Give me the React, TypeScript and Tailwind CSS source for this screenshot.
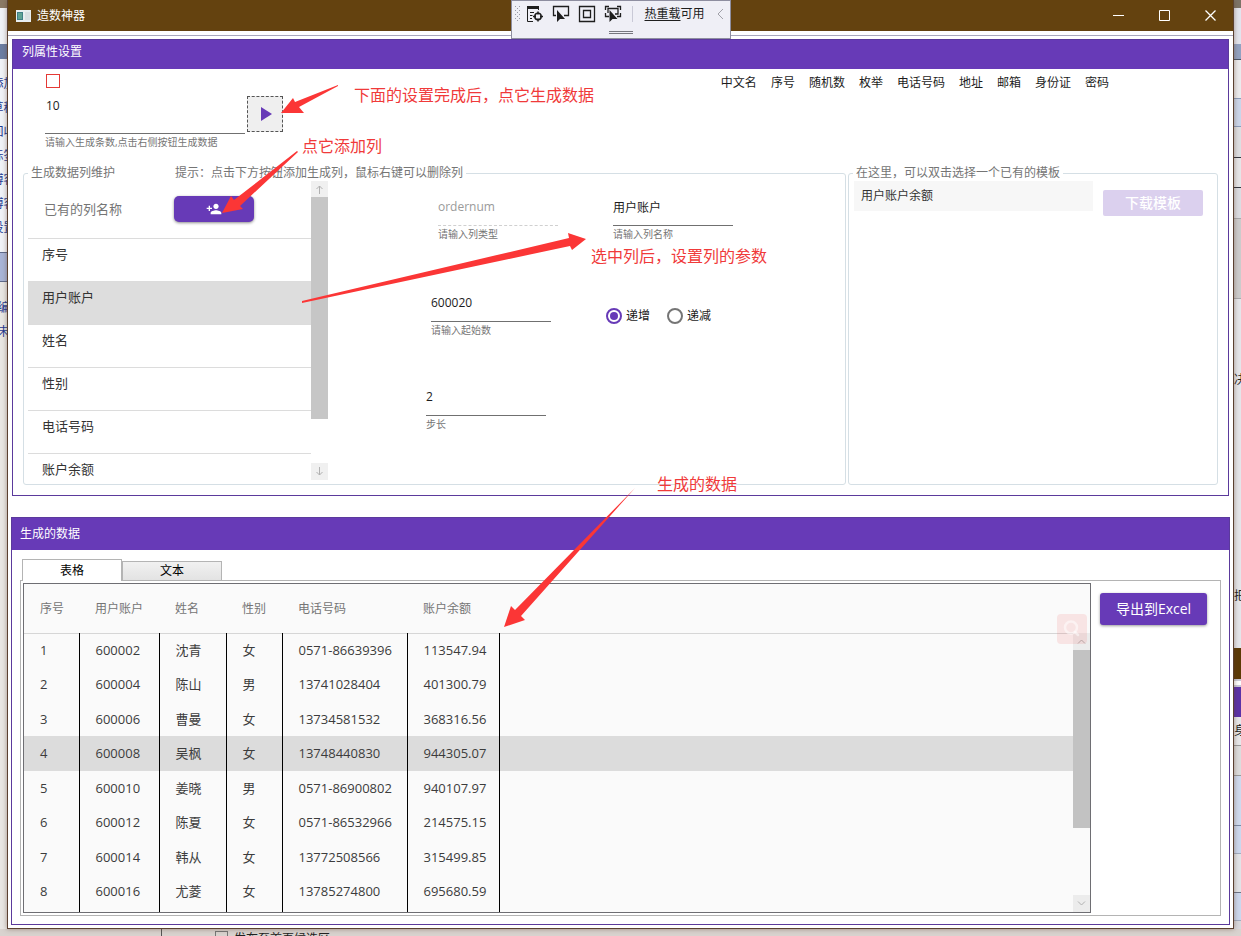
import { useState } from "react";
import clsx from "clsx";
import { MdPersonAdd, MdPlayArrow } from "react-icons/md";

const generators = ["中文名", "序号", "随机数", "枚举", "电话号码", "地址", "邮箱", "身份证", "密码"];

const columns = [
  { name: "序号", width: "w-[55px]" },
  { name: "用户账户", width: "w-[80px]" },
  { name: "姓名", width: "w-[67px]" },
  { name: "性别", width: "w-[56px]" },
  { name: "电话号码", width: "w-[125px]" },
  { name: "账户余额", width: "w-[92px]" },
];

const rows = [
  ["1", "600002", "沈青", "女", "0571-86639396", "113547.94"],
  ["2", "600004", "陈山", "男", "13741028404", "401300.79"],
  ["3", "600006", "曹曼", "女", "13734581532", "368316.56"],
  ["4", "600008", "吴枫", "女", "13748440830", "944305.07"],
  ["5", "600010", "姜晓", "男", "0571-86900802", "940107.97"],
  ["6", "600012", "陈夏", "女", "0571-86532966", "214575.15"],
  ["7", "600014", "韩从", "女", "13772508566", "315499.85"],
  ["8", "600016", "尤菱", "女", "13785274800", "695680.59"],
];

// slices of the windows that show on both sides of the main one
const leftSlices = [
  { cls: "h-2 bg-[#8b7a66]", text: "" },
  { cls: "h-9 bg-[#f1f3f8]", text: "" },
  { cls: "h-[15px] bg-[#6c7ea4]", text: "" },
  { cls: "h-[13px] bg-[#f1f3f8]", text: "" },
  { cls: "h-6 bg-[#f1f3f8]", text: "添加" },
  { cls: "h-6 bg-[#f1f3f8]", text: "草稿" },
  { cls: "h-6 bg-[#f1f3f8]", text: "回收" },
  { cls: "h-6 bg-[#f1f3f8]", text: "标签" },
  { cls: "h-6 bg-[#f1f3f8]", text: "博客" },
  { cls: "h-6 bg-[#f1f3f8]", text: "博客" },
  { cls: "h-6 bg-[#f1f3f8]", text: "设置" },
  { cls: "h-3 bg-[#f1f3f8]", text: "" },
  { cls: "h-[30px] border-y border-[#5f6b8c] bg-[#a9b5d8]", text: "" },
  { cls: "h-[14px] bg-[#e9e7e4]", text: "" },
  { cls: "h-6 bg-[#e9e7e4]", text: "编" },
  { cls: "h-6 bg-[#e9e7e4]", text: "未" },
  { cls: "flex-1 bg-[#e9e7e4]", text: "" },
];

const rightSlices = [
  { cls: "h-2 bg-[#7d7468]", text: "" },
  { cls: "h-9 bg-[#e3e5ee]", text: "" },
  { cls: "h-4 border-b border-[#4b5568] bg-[#93a3c2]", text: "" },
  { cls: "h-[38px] bg-[#ececee]", text: "" },
  { cls: "h-[29px] border-y border-[#8c9dbb] bg-[#cbd6ea]", text: "" },
  { cls: "h-[31px] border-b border-[#33363f] bg-[#dedfe2]", text: "" },
  { cls: "h-[30px] border-b border-[#33363f] bg-[#e6e6e8]", text: "" },
  { cls: "h-[31px] border-b border-[#a9a9ac] bg-[#dcdde2]", text: "" },
  { cls: "h-[80px] border-b border-[#a9a9ac] bg-[#cdcccc]", text: "" },
  { cls: "h-[162px] bg-[#e5e6ea]", text: "决" },
  { cls: "h-[83px] bg-[#e5e6ea]", text: "" },
  { cls: "h-[104px] bg-[#e5e6ea]", text: "把" },
  { cls: "h-[31px] bg-[#5c3b06]", text: "" },
  { cls: "h-2 border-y-2 border-[#c9c9d6] bg-white", text: "" },
  { cls: "h-[30px] bg-[#5c32a8]", text: "" },
  { cls: "h-7 bg-[#e8e8ea]", text: "身" },
  { cls: "h-[31px] border-y border-[#9b9b9b] bg-[#dddddd]", text: "" },
  { cls: "h-[50px] border-b border-[#7c8aa5] bg-[#cfdaee]", text: "" },
  { cls: "h-[28px] border-b border-[#a3adc0] bg-[#ccd8ee]", text: "" },
  { cls: "h-[39px] border-b border-[#6d7587] bg-[#e2e4e8]", text: "" },
  { cls: "h-[28px] border-b border-[#a3adc0] bg-[#ccd8ee]", text: "" },
  { cls: "flex-1 bg-[#d8d8dc]", text: "" },
];

function Slices({ items, className }: { items: { cls: string; text: string }[]; className: string }) {
  return (
    <div className={clsx("flex shrink-0 flex-col overflow-hidden", className)}>
      {items.map((s, i) => (
        <div key={i} className={clsx("flex shrink-0 items-center overflow-hidden whitespace-nowrap text-[12px] leading-4", s.cls)}>
          {s.text}
        </div>
      ))}
    </div>
  );
}

function DebugToolbar() {
  return (
    <div className="absolute top-0 left-1/2 z-20 flex h-[39px] w-[220px] -translate-x-1/2 flex-col border border-[#8e8ea0] bg-[#efeff6] text-[#1e1e1e]">
      <div className="flex h-[25px] items-center">
        <svg className="ml-[3px] h-4 w-[6px] shrink-0" viewBox="0 0 6 16" fill="#9a9aa6">
          {[0, 4, 8, 12].map((y) => (
            <g key={y}>
              <rect x="0" y={y} width="1" height="1" />
              <rect x="4" y={y} width="1" height="1" />
              <rect x="2" y={y + 2} width="1" height="1" />
            </g>
          ))}
        </svg>
        <button aria-label="实时可视化树" className="ml-1 p-px">
          <svg className="size-[18px]" viewBox="0 0 18 18" fill="none" stroke="currentColor">
            <path d="M1 1h12v3H1z" fill="currentColor" stroke="none" />
            <path d="M1.500 3v13.500H7M12.500 3v2M4 7.500h4M4 10.500h2.500M4 13.500h2" />
            <circle cx="12" cy="11.500" r="3.200" strokeWidth="1.500" />
            <path d="M12 6.500v3M12 13.500v3M7 11.500h3M14 11.500h3" strokeWidth="1.500" />
          </svg>
        </button>
        <button aria-label="选择元素" className="ml-[6px] p-px">
          <svg className="size-[18px]" viewBox="0 0 18 18" fill="none" stroke="currentColor">
            <path d="M4 10.500H1.500v-9h15v9H12" strokeWidth="1.300" />
            <path d="M5 5v12l3-3h5z" fill="currentColor" stroke="none" />
          </svg>
        </button>
        <button aria-label="显示布局装饰器" className="ml-[6px] p-px">
          <svg className="size-[18px]" viewBox="0 0 18 18" fill="none" stroke="currentColor" strokeWidth="1.300">
            <path d="M1.500 1.500h15v15h-15zM5.500 5.500h7v7h-7z" />
          </svg>
        </button>
        <button aria-label="跟踪具有焦点的元素" className="ml-[6px] p-px">
          <svg className="size-[18px]" viewBox="0 0 18 18" fill="none" stroke="currentColor" strokeWidth="1.300">
            <path d="M1.500 5V1.500H5M13 1.500h3.500V5M16.500 8v3.500H13M5 11.500H1.500V8" />
            <path d="M4 8V3.500h10V9h-3" />
            <path d="M5.500 5v12l3-3h5z" fill="currentColor" stroke="none" />
          </svg>
        </button>
        <span className="ml-[9px] h-4 w-px bg-[#c9c9d6]" />
        <button className="ml-3 text-[12px] leading-4 whitespace-nowrap">
          <span className="underline underline-offset-2">热重载</span>可用
        </button>
        <button aria-label="收起" className="ml-3 text-[#a0a0a8]">
          <svg className="h-3 w-[7px]" viewBox="0 0 7 12" fill="none" stroke="currentColor">
            <path d="M6 1 1 6l5 5" />
          </svg>
        </button>
      </div>
      <div className="mt-[5px] ml-[97px] h-[3px] w-6 border-y border-[#77777f]" />
    </div>
  );
}

function TitleBar() {
  return (
    <header className="flex h-[31px] items-center bg-[#64420f] text-white">
      <svg className="ml-2 h-3 w-[15px]" viewBox="0 0 15 12">
        <rect width="15" height="12" fill="#e8eef0" />
        <rect x="1" y="2" width="6" height="8" fill="#3f7f86" />
        <rect x="2" y="3" width="4" height="6" fill="#5fa394" />
        <rect x="9" y="2" width="5" height="8" fill="#d9e0e3" />
      </svg>
      <h1 className="ml-[6px] flex-1 text-[12px] leading-4">造数神器</h1>
      <button aria-label="最小化" className="flex h-full w-[46px] items-center justify-center">
        <svg className="size-[11px]" viewBox="0 0 11 11" stroke="currentColor"><path d="M0 5.500h11" /></svg>
      </button>
      <button aria-label="最大化" className="flex h-full w-[46px] items-center justify-center">
        <svg className="size-[11px]" viewBox="0 0 11 11" stroke="currentColor" fill="none"><path d="M.5.5h10v10H.5z" /></svg>
      </button>
      <button aria-label="关闭" className="flex h-full w-[46px] items-center justify-center">
        <svg className="size-[11px]" viewBox="0 0 11 11" stroke="currentColor" strokeWidth="1.300"><path d="m.5.5 10 10M10.500.5l-10 10" /></svg>
      </button>
    </header>
  );
}

function Field({ id, label, value, disabled }: { id: string; label: string; value: string; disabled?: boolean }) {
  return (
    <div className="flex w-[120px] flex-col">
      <input
        id={id}
        defaultValue={value}
        disabled={disabled}
        className={clsx(
          "h-7 w-full border-b bg-transparent pb-[10px] text-[12px] leading-[18px] outline-none",
          disabled ? "border-dashed border-[#d0d0d0] text-[#9a9a9a]" : "border-[#707070] text-[#1c1c1c]"
        )}
      />
      <label htmlFor={id} className="text-[10px] leading-4 text-[#757575]">{label}</label>
    </div>
  );
}

function ColumnList() {
  const [active, setActive] = useState("用户账户");
  return (
    <div className="flex h-[299px] w-[300px] shrink-0">
      <div className="flex-1 overflow-hidden">
        <div className="flex h-[58px] items-center border-b border-[#dcdcdc] pb-[2px] pl-4">
          <span className="w-[130px] text-[13px] leading-5 text-[#757575]">已有的列名称</span>
          <button aria-label="添加列" className="flex h-[26px] w-20 items-center justify-center rounded-[5px] bg-[#673ab7] text-white shadow-[0_1px_3px_rgba(0,0,0,0.45)]">
            <MdPersonAdd className="size-4" />
          </button>
        </div>
        <ul>
          {columns.map(({ name }) => (
            <li key={name} className={clsx("h-[43px] border-b border-[#dcdcdc]", name === active && "bg-[#dddddd]")}>
              <button onClick={() => setActive(name)} className="flex h-full w-full items-start px-[14px] pt-[5px] text-[13px] leading-5 text-[#333333]">
                {name}
              </button>
            </li>
          ))}
        </ul>
      </div>
      <div className="flex w-[17px] flex-col">
        <div className="flex h-4 items-center justify-center bg-[#f0f0f0]">
          <svg className="size-[9px]" viewBox="0 0 9 9" fill="none" stroke="#b0b0b0"><path d="M4.500 9V1M1.500 4l3-3 3 3" /></svg>
        </div>
        <div className="h-[222px] bg-[#c6c6c6]" />
        <div className="flex-1" />
        <div className="flex h-[17px] items-center justify-center bg-[#f0f0f0]">
          <svg className="size-[9px]" viewBox="0 0 9 9" fill="none" stroke="#b0b0b0"><path d="M4.500 0v8M1.500 5l3 3 3-3" /></svg>
        </div>
      </div>
    </div>
  );
}

function ColumnForm() {
  return (
    <div className="flex flex-1 flex-col pt-[17px]">
      <div className="flex gap-[55px] pl-[110px]">
        <Field id="columnType" label="请输入列类型" value="ordernum" disabled />
        <Field id="columnName" label="请输入列名称" value="用户账户" />
      </div>
      <div className="mt-[52px] flex gap-[55px] pl-[103px]">
        <Field id="start" label="请输入起始数" value="600020" />
        <div className="flex h-[43px] items-center gap-[17px] text-[12px] leading-4 text-[#1c1c1c]">
          <label className="flex items-center gap-1">
            <input type="radio" name="direction" defaultChecked className="size-4 appearance-none rounded-full border-2 border-[#757575] bg-clip-content p-[2px] checked:border-[#673ab7] checked:bg-[#673ab7]" />
            递增
          </label>
          <label className="flex items-center gap-1">
            <input type="radio" name="direction" className="size-4 appearance-none rounded-full border-2 border-[#757575] bg-clip-content p-[2px] checked:border-[#673ab7] checked:bg-[#673ab7]" />
            递减
          </label>
        </div>
      </div>
      <div className="mt-[50px] flex pl-[98px]">
        <Field id="step" label="步长" value="2" />
      </div>
    </div>
  );
}

function SettingsPanel() {
  return (
    <section className="mx-1 mt-[3px] border border-[#5b3a9c] bg-white">
      <h2 className="h-[29px] bg-[#673ab7] px-[9px] pt-1 text-[12px] leading-4 text-white">列属性设置</h2>
      <div className="flex items-start justify-between pt-[5px] pr-[119px] pl-8">
        <div>
          <input type="checkbox" aria-label="启用" className="ml-px block size-[14px] appearance-none border border-[#e53935]" />
          <div className="mt-2 flex gap-[2px]">
            <div className="flex w-[200px] flex-col">
              <input id="count" defaultValue="10" className="h-[38px] border-b border-[#707070] px-px pb-[19px] text-[12px] leading-[18px] text-[#1c1c1c] outline-none" />
              <label htmlFor="count" className="text-[10px] leading-4 text-[#757575]">请输入生成条数,点击右侧按钮生成数据</label>
            </div>
            <button aria-label="生成数据" className="flex size-9 items-center justify-center border border-dashed border-[#555555] bg-[#efefef] text-[#673ab7]">
              <MdPlayArrow className="size-6" />
            </button>
          </div>
        </div>
        <nav className="flex gap-[14px] pt-px text-[12px] leading-4 text-[#1c1c1c]">
          {generators.map((g) => (
            <button key={g} className="whitespace-nowrap">{g}</button>
          ))}
        </nav>
      </div>

      <div className="mt-[15px] flex gap-[2px] px-[10px] pb-[10px]">
        <fieldset className="min-w-0 flex-1 rounded-[3px] border border-[#d5dfe5]">
          <legend className="ml-1 flex gap-[60px] px-[3px] text-[12px] leading-4 text-[#757575]">
            <span>生成数据列维护</span>
            <span>提示：点击下方按钮添加生成列，鼠标右键可以删除列</span>
          </legend>
          <div className="flex pb-1 pl-1">
            <ColumnList />
            <ColumnForm />
          </div>
        </fieldset>
        <fieldset className="w-[370px] rounded-[3px] border border-[#d5dfe5]">
          <legend className="ml-1 px-[3px] text-[12px] leading-4 text-[#757575]">在这里，可以双击选择一个已有的模板</legend>
          <div className="flex items-start gap-[10px] pr-[14px] pl-[5px]">
            <ul className="flex-1 bg-[#f7f7f7] text-[12px] text-[#333333]">
              <li className="h-[30px] px-[7px] leading-[29px]">用户账户余额</li>
            </ul>
            <button disabled className="mt-[9px] h-[26px] w-[100px] rounded-[2px] bg-[#dbd0ee] text-[14px] leading-5 font-medium text-white">
              下载模板
            </button>
          </div>
        </fieldset>
      </div>
    </section>
  );
}

function DataGrid() {
  const [selected, setSelected] = useState("4");
  return (
    <div className="relative flex-1 border border-[#6e6e73] bg-[#fafafa]">
      <table className="w-full table-fixed border-collapse text-left text-[#3c3c3c]">
        <thead>
          <tr className="h-[49px] border-b border-[#d6d6d6] text-[12px] leading-4 text-[#757575]">
            {columns.map((c) => (
              <th key={c.name} className={clsx("pt-[2px] pl-4 font-normal whitespace-nowrap", c.width)}>{c.name}</th>
            ))}
            <th />
          </tr>
        </thead>
        <tbody>
          {rows.map((row) => (
            <tr
              key={row[0]}
              onClick={() => setSelected(row[0])}
              className={clsx(
                "text-[13px] leading-5 odd:h-[34px] even:h-[35px] even:[&>td]:pb-[2px]",
                row[0] === selected && "bg-[#dcdcdc]"
              )}
            >
              {row.map((cell, i) => (
                <td key={i} className="border-r border-black pl-4 whitespace-nowrap">{cell}</td>
              ))}
              <td />
            </tr>
          ))}
          <tr className="h-[3px]">
            {columns.map((c) => <td key={c.name} className="border-r border-black" />)}
            <td />
          </tr>
        </tbody>
      </table>
      <div className="absolute top-[49px] right-0 bottom-0 flex w-[17px] flex-col bg-[#fafafa]">
        <div className="flex h-[17px] items-center justify-center bg-[#ececec]">
          <svg className="h-[5px] w-[9px]" viewBox="0 0 9 5" fill="none" stroke="#b0b0b0"><path d="m1 4.500 3.500-3.500L8 4.500" /></svg>
        </div>
        <div className="h-[178px] bg-[#c2c2c2]" />
        <div className="flex-1" />
        <div className="flex h-[17px] items-center justify-center bg-[#ececec]">
          <svg className="h-[5px] w-[9px]" viewBox="0 0 9 5" fill="none" stroke="#b0b0b0"><path d="M1 .5 4.500 4 8 .5" /></svg>
        </div>
      </div>
      <svg className="absolute top-[30px] right-[3px] size-[30px]" viewBox="0 0 30 30">
        <rect width="30" height="30" rx="4" fill="#f04848" fillOpacity="0.12" />
        <circle cx="14" cy="13.500" r="6" fill="none" stroke="#fff" strokeOpacity="0.5" strokeWidth="2.500" />
        <path d="m18 18 3 3" stroke="#fff" strokeOpacity="0.5" strokeWidth="2.500" strokeLinecap="round" />
      </svg>
    </div>
  );
}

function DataPanel() {
  return (
    <section className="mx-[3px] mt-[21px] mb-[3px] border border-[#5b3a9c] bg-white">
      <h2 className="h-8 bg-[#673ab7] px-2 pt-2 text-[12px] leading-4 text-white">生成的数据</h2>
      <div className="px-2 pt-[9px] pb-2">
        <div role="tablist" className="flex items-end pl-[2px] text-[12px] leading-4 text-black">
          <button role="tab" aria-selected="true" className="relative z-10 -mb-px h-[22px] w-[100px] border border-b-0 border-[#b4b4b4] bg-white">
            表格
          </button>
          <button role="tab" aria-selected="false" className="h-[19px] w-[100px] border border-b-0 border-[#b4b4b4] bg-linear-to-b from-[#f1f1f1] to-[#e3e3e3]">
            文本
          </button>
        </div>
        <div className="flex gap-[9px] border border-[#b4b4b4] py-[2px] pr-[13px] pl-[2px]">
          <DataGrid />
          <button className="mt-[10px] h-8 w-[107px] rounded-[3px] bg-[#673ab7] text-[14px] leading-5 whitespace-nowrap text-white shadow-[0_1px_3px_rgba(0,0,0,0.4)]">
            导出到Excel
          </button>
        </div>
      </div>
    </section>
  );
}

function Annotations() {
  return (
    <div className="pointer-events-none absolute inset-0 z-30 overflow-hidden text-[16px] leading-5 whitespace-nowrap text-[#f03a3a]">
      <svg className="absolute top-0 left-0 h-[640px] w-[800px]" viewBox="0 0 800 640" fill="#fb3636">
        <path d="M281 113 293 98 295 102 338 85 338 86 299 107 304 113Z" />
        <path d="M222 213 231 196 234 200 297 151 298 152 240 206 243 209Z" />
        <path d="M586 239 568 233 569 238 302 301 302 303 570 246 572 250Z" />
        <path d="M504 627 511 606 515 610 635 488 521 616 525 620Z" />
      </svg>
      <span className="absolute top-[85px] left-[354px]">下面的设置完成后，点它生成数据</span>
      <span className="absolute top-[136px] left-[302px]">点它添加列</span>
      <span className="absolute top-[246px] left-[591px]">选中列后，设置列的参数</span>
      <span className="absolute top-[474px] left-[657px]">生成的数据</span>
    </div>
  );
}

export default function App() {
  return (
    <div className="relative overflow-hidden bg-[#d9d3cf] font-['Open_Sans','Noto_Sans_CJK_SC',sans-serif]">
      <div className="flex">
        <Slices items={leftSlices} className="w-[7px] text-[#1f3a93] [&>div]:justify-center" />
        <main className="relative z-10 min-w-0 flex-1 border-x border-b border-[#5a4030] bg-white shadow-[0_0_5px_rgba(90,60,40,0.5)]">
          <TitleBar />
          <div className="mt-1 border-t border-[#aaa8bd]">
            <SettingsPanel />
            <DataPanel />
          </div>
        </main>
        <Slices items={rightSlices} className="w-[7px] text-[#222222]" />
      </div>
      <footer className="flex h-[7px] items-start overflow-hidden pl-[161px] text-[12px] leading-4 text-[#222222]">
        <label className="flex gap-[6px] border-l border-[#555555] pt-[2px] pl-[53px]">
          <input type="checkbox" className="size-[13px] appearance-none border border-[#777777]" />
          发布至首页候选区
        </label>
      </footer>
      <DebugToolbar />
      <Annotations />
    </div>
  );
}
